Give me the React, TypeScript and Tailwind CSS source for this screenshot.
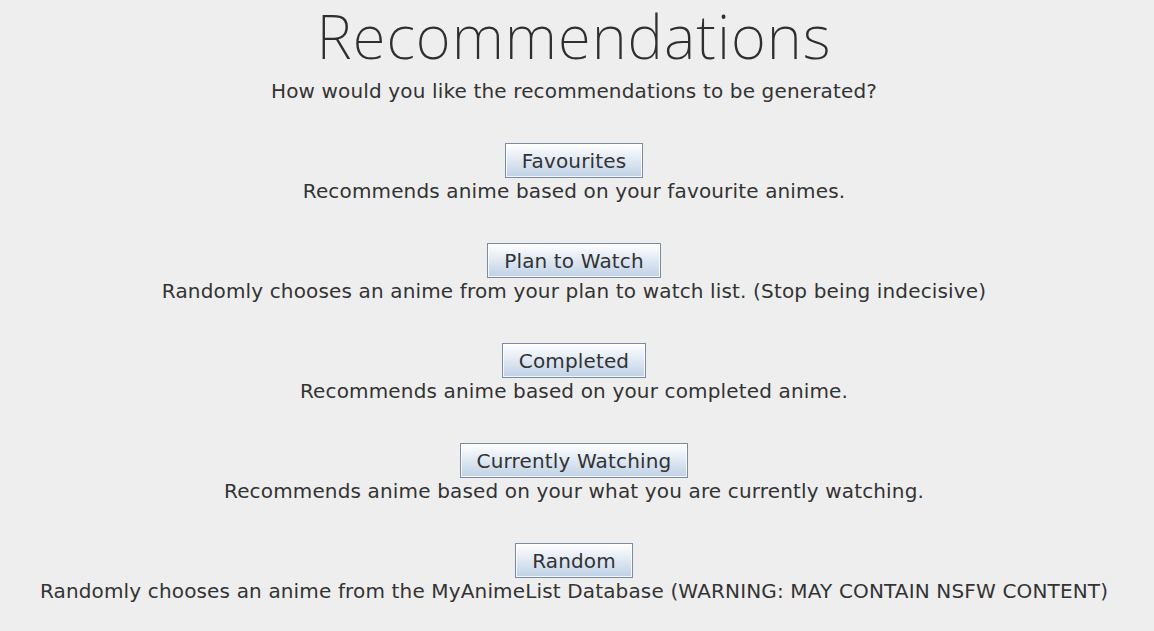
const options = [
  { label: "Favourites", desc: "Recommends anime based on your favourite animes." },
  { label: "Plan to Watch", desc: "Randomly chooses an anime from your plan to watch list. (Stop being indecisive)" },
  { label: "Completed", desc: "Recommends anime based on your completed anime." },
  { label: "Currently Watching", desc: "Recommends anime based on your what you are currently watching." },
  { label: "Random", desc: "Randomly chooses an anime from the MyAnimeList Database (WARNING: MAY CONTAIN NSFW CONTENT)" },
];

export default function App() {
  return (
    <div className="w-[1154px] h-[631px] pr-[6px] bg-[#eeeeee] flex flex-col items-center text-[#333333] font-['DejaVu_Sans',sans-serif] tracking-[0.15px] overflow-hidden">
      {/* Title */}
      <h1 className="mt-[-5px] mb-[3px] leading-[82px] text-[60px] font-extralight tracking-[1px] font-['Noto_Sans',sans-serif] text-[#2f2f2f]">
        Recommendations
      </h1>
      <p className="h-[26px] leading-[22px] text-[20px]">
        How would you like the recommendations to be generated?
      </p>

      {/* Options */}
      <div className="mt-[37px] flex flex-col items-center gap-[40px]">
        {options.map((o) => (
          <div key={o.label} className="flex flex-col items-center">
            <button className="h-[35px] px-[16px] text-[20px] text-[#333333] border border-[#7a8ca3] bg-gradient-to-b from-white to-[#bfd1e5] shadow-[inset_0_0_0_1px_rgba(255,255,255,0.8)]">
              {o.label}
            </button>
            <p className="h-[25px] leading-[27px] text-[20px]">{o.desc}</p>
          </div>
        ))}
      </div>
    </div>
  );
}
